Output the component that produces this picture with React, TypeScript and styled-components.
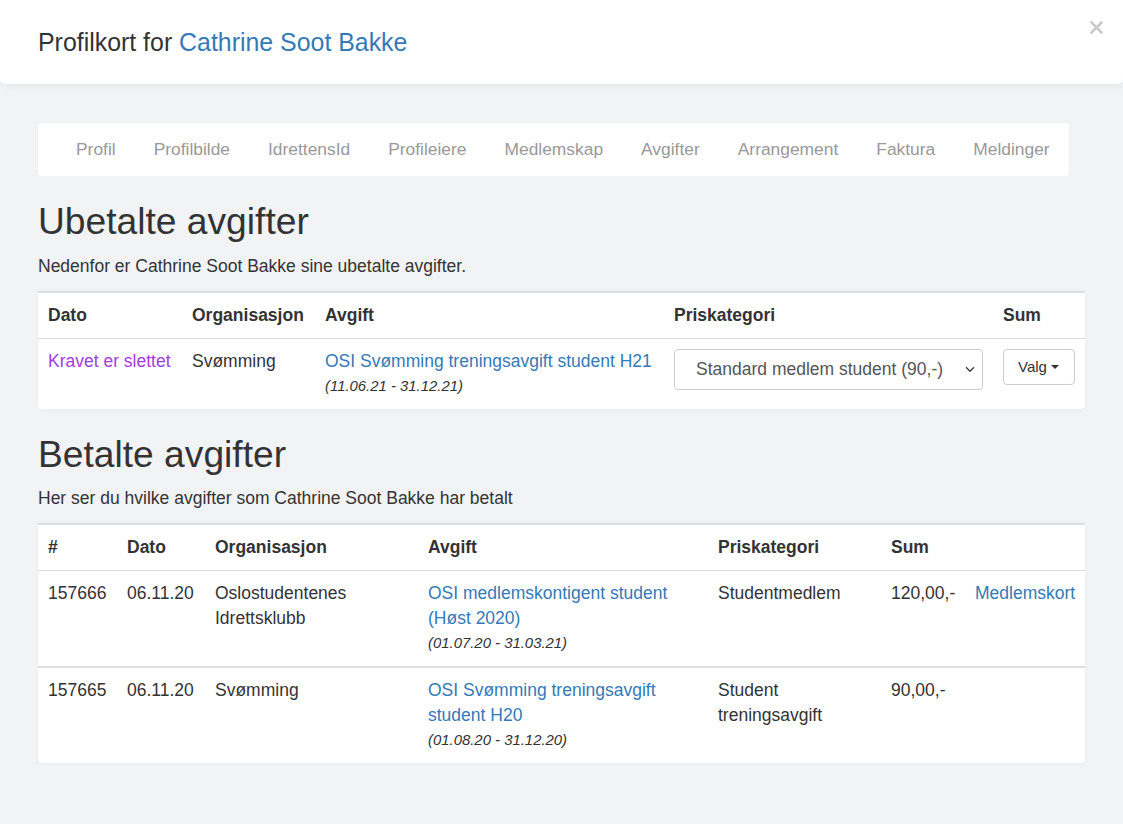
import React from "react";
import styled, { createGlobalStyle } from "styled-components";

const GlobalStyle = createGlobalStyle`
  html, body {
    margin: 0;
    padding: 0;
    background: #f2f3f5;
  }
  body {
    font-family: "Liberation Sans", Arial, Helvetica, sans-serif;
    font-size: 17.5px;
    line-height: 25px;
    color: #333;
  }
  * { box-sizing: border-box; }
`;

const Header = styled.header`
  display: flex;
  align-items: flex-start;
  justify-content: space-between;
  height: 84px;
  background: #fff;
  border-radius: 0 0 5px 5px;
  box-shadow: 0 2px 8px rgba(0, 0, 0, 0.06);
  padding-left: 38px;
`;

const Title = styled.h4`
  margin: 0;
  align-self: center;
  font-size: 24.9px;
  font-weight: normal;
  line-height: 30px;
  color: #333;
`;

const Link = styled.a`
  color: #337ab7;
  text-decoration: none;
  cursor: pointer;
`;

const CloseButton = styled.button`
  margin: 21px 20px 0 0;
  padding: 0;
  border: 0;
  background: transparent;
  width: 13px;
  height: 13px;
  display: flex;
  cursor: pointer;
`;

const Content = styled.main`
  padding: 39px 38px 60px;
`;

const Nav = styled.nav`
  display: inline-flex;
  height: 53px;
  align-items: center;
  background: #fff;
  border-radius: 4px;
  padding-left: 19px;
  font-size: 17.4px;
`;

const NavItem = styled.a`
  padding: 0 19px;
  line-height: 53px;
  color: #999;
  text-decoration: none;
  white-space: nowrap;
`;

const Heading = styled.h1`
  margin: 25px 0 12px;
  font-size: 37.2px;
  font-weight: normal;
  line-height: 40.7px;
  color: #333;
`;

const Lead = styled.p`
  margin: 0 0 12px;
`;

const Card = styled.div`
  background: #fff;
  border-top: 2px solid #ddd;
  border-radius: 0 0 4px 4px;
  box-shadow: 0 1px 4px rgba(0, 0, 0, 0.04);
  overflow: hidden;
`;

const Table = styled.table`
  width: 100%;
  border-collapse: collapse;
  table-layout: fixed;
`;

const Th = styled.th`
  text-align: left;
  font-weight: bold;
  padding: 10px;
  border-bottom: 1px solid #ddd;
  white-space: nowrap;
`;

const Tr = styled.tr`
  & + & > td {
    border-top: 2px solid #ddd;
  }
`;

const Td = styled.td<{ $nowrap?: boolean }>`
  padding: 10px;
  vertical-align: top;
  white-space: ${(p) => (p.$nowrap ? "nowrap" : "normal")};
`;

const Deleted = styled.span`
  color: #a43be0;
`;

const Period = styled.small`
  display: block;
  font-size: 14.9px;
  font-style: italic;
`;

const SelectWrap = styled.div`
  position: relative;
  width: 100%;
`;

const Select = styled.select`
  appearance: none;
  -webkit-appearance: none;
  width: 100%;
  height: 41px;
  padding: 0 36px 0 21px;
  border: 1px solid #ccc;
  border-radius: 4px;
  background: #fff;
  color: #555;
  font-family: inherit;
  font-size: 17.5px;
  outline: none;
`;

const Chevron = styled.svg`
  position: absolute;
  right: 8px;
  top: 17px;
  pointer-events: none;
`;

const ValgButton = styled.button`
  display: inline-flex;
  align-items: center;
  height: 36px;
  padding: 0 15px 0 14px;
  border: 1px solid #ccc;
  border-radius: 4px;
  background: #fff;
  color: #333;
  font-family: inherit;
  font-size: 15px;
  cursor: pointer;
`;

const Caret = styled.span`
  display: inline-block;
  width: 0;
  height: 0;
  margin-left: 4px;
  margin-top: 1px;
  border-top: 4.5px solid #333;
  border-left: 4px solid transparent;
  border-right: 4px solid transparent;
`;

const navItems = [
  "Profil",
  "Profilbilde",
  "IdrettensId",
  "Profileiere",
  "Medlemskap",
  "Avgifter",
  "Arrangement",
  "Faktura",
  "Meldinger",
];

type Paid = {
  id: string;
  date: string;
  org: string;
  fee: string;
  period: string;
  category: string;
  sum: string;
  card?: string;
};

const paid: Paid[] = [
  {
    id: "157666",
    date: "06.11.20",
    org: "Oslostudentenes Idrettsklubb",
    fee: "OSI medlemskontigent student (Høst 2020)",
    period: "(01.07.20 - 31.03.21)",
    category: "Studentmedlem",
    sum: "120,00,-",
    card: "Medlemskort",
  },
  {
    id: "157665",
    date: "06.11.20",
    org: "Svømming",
    fee: "OSI Svømming treningsavgift student H20",
    period: "(01.08.20 - 31.12.20)",
    category: "Student treningsavgift",
    sum: "90,00,-",
  },
];

export default function App() {
  return (
    <>
      <GlobalStyle />
      <Header>
        <Title>
          Profilkort for <Link>Cathrine Soot Bakke</Link>
        </Title>
        <CloseButton aria-label="Lukk">
          <svg width="13" height="13" viewBox="0 0 13 13">
            <path
              d="M1.5 1.5 L11.5 11.5 M11.5 1.5 L1.5 11.5"
              stroke="#c9c9c9"
              strokeWidth="2.6"
              strokeLinecap="square"
            />
          </svg>
        </CloseButton>
      </Header>
      <Content>
        <Nav>
          {navItems.map((n) => (
            <NavItem key={n}>{n}</NavItem>
          ))}
        </Nav>

        <Heading>Ubetalte avgifter</Heading>
        <Lead>Nedenfor er Cathrine Soot Bakke sine ubetalte avgifter.</Lead>
        <Card>
          <Table>
            <colgroup>
              <col style={{ width: 144 }} />
              <col style={{ width: 133 }} />
              <col style={{ width: 349 }} />
              <col style={{ width: 329 }} />
              <col style={{ width: 92 }} />
            </colgroup>
            <thead>
              <tr>
                <Th>Dato</Th>
                <Th>Organisasjon</Th>
                <Th>Avgift</Th>
                <Th>Priskategori</Th>
                <Th>Sum</Th>
              </tr>
            </thead>
            <tbody>
              <Tr>
                <Td $nowrap>
                  <Deleted>Kravet er slettet</Deleted>
                </Td>
                <Td>Svømming</Td>
                <Td>
                  <Link>OSI Svømming treningsavgift student H21</Link>
                  <Period>(11.06.21 - 31.12.21)</Period>
                </Td>
                <Td>
                  <SelectWrap>
                    <Select defaultValue="std">
                      <option value="std">Standard medlem student (90,-)</option>
                    </Select>
                    <Chevron width="10" height="7" viewBox="0 0 10 7">
                      <path
                        d="M1 1.2 L5 5.2 L9 1.2"
                        fill="none"
                        stroke="#444"
                        strokeWidth="1.5"
                      />
                    </Chevron>
                  </SelectWrap>
                </Td>
                <Td>
                  <ValgButton>
                    Valg <Caret />
                  </ValgButton>
                </Td>
              </Tr>
            </tbody>
          </Table>
        </Card>

        <Heading>Betalte avgifter</Heading>
        <Lead>Her ser du hvilke avgifter som Cathrine Soot Bakke har betalt</Lead>
        <Card>
          <Table>
            <colgroup>
              <col style={{ width: 79 }} />
              <col style={{ width: 88 }} />
              <col style={{ width: 213 }} />
              <col style={{ width: 290 }} />
              <col style={{ width: 173 }} />
              <col style={{ width: 84 }} />
              <col style={{ width: 120 }} />
            </colgroup>
            <thead>
              <tr>
                <Th>#</Th>
                <Th>Dato</Th>
                <Th>Organisasjon</Th>
                <Th>Avgift</Th>
                <Th>Priskategori</Th>
                <Th>Sum</Th>
                <Th />
              </tr>
            </thead>
            <tbody>
              {paid.map((p) => (
                <Tr key={p.id}>
                  <Td>{p.id}</Td>
                  <Td>{p.date}</Td>
                  <Td>{p.org}</Td>
                  <Td>
                    <Link>{p.fee}</Link>
                    <Period>{p.period}</Period>
                  </Td>
                  <Td>{p.category}</Td>
                  <Td $nowrap>{p.sum}</Td>
                  <Td $nowrap>{p.card ? <Link>{p.card}</Link> : null}</Td>
                </Tr>
              ))}
            </tbody>
          </Table>
        </Card>
      </Content>
    </>
  );
}
